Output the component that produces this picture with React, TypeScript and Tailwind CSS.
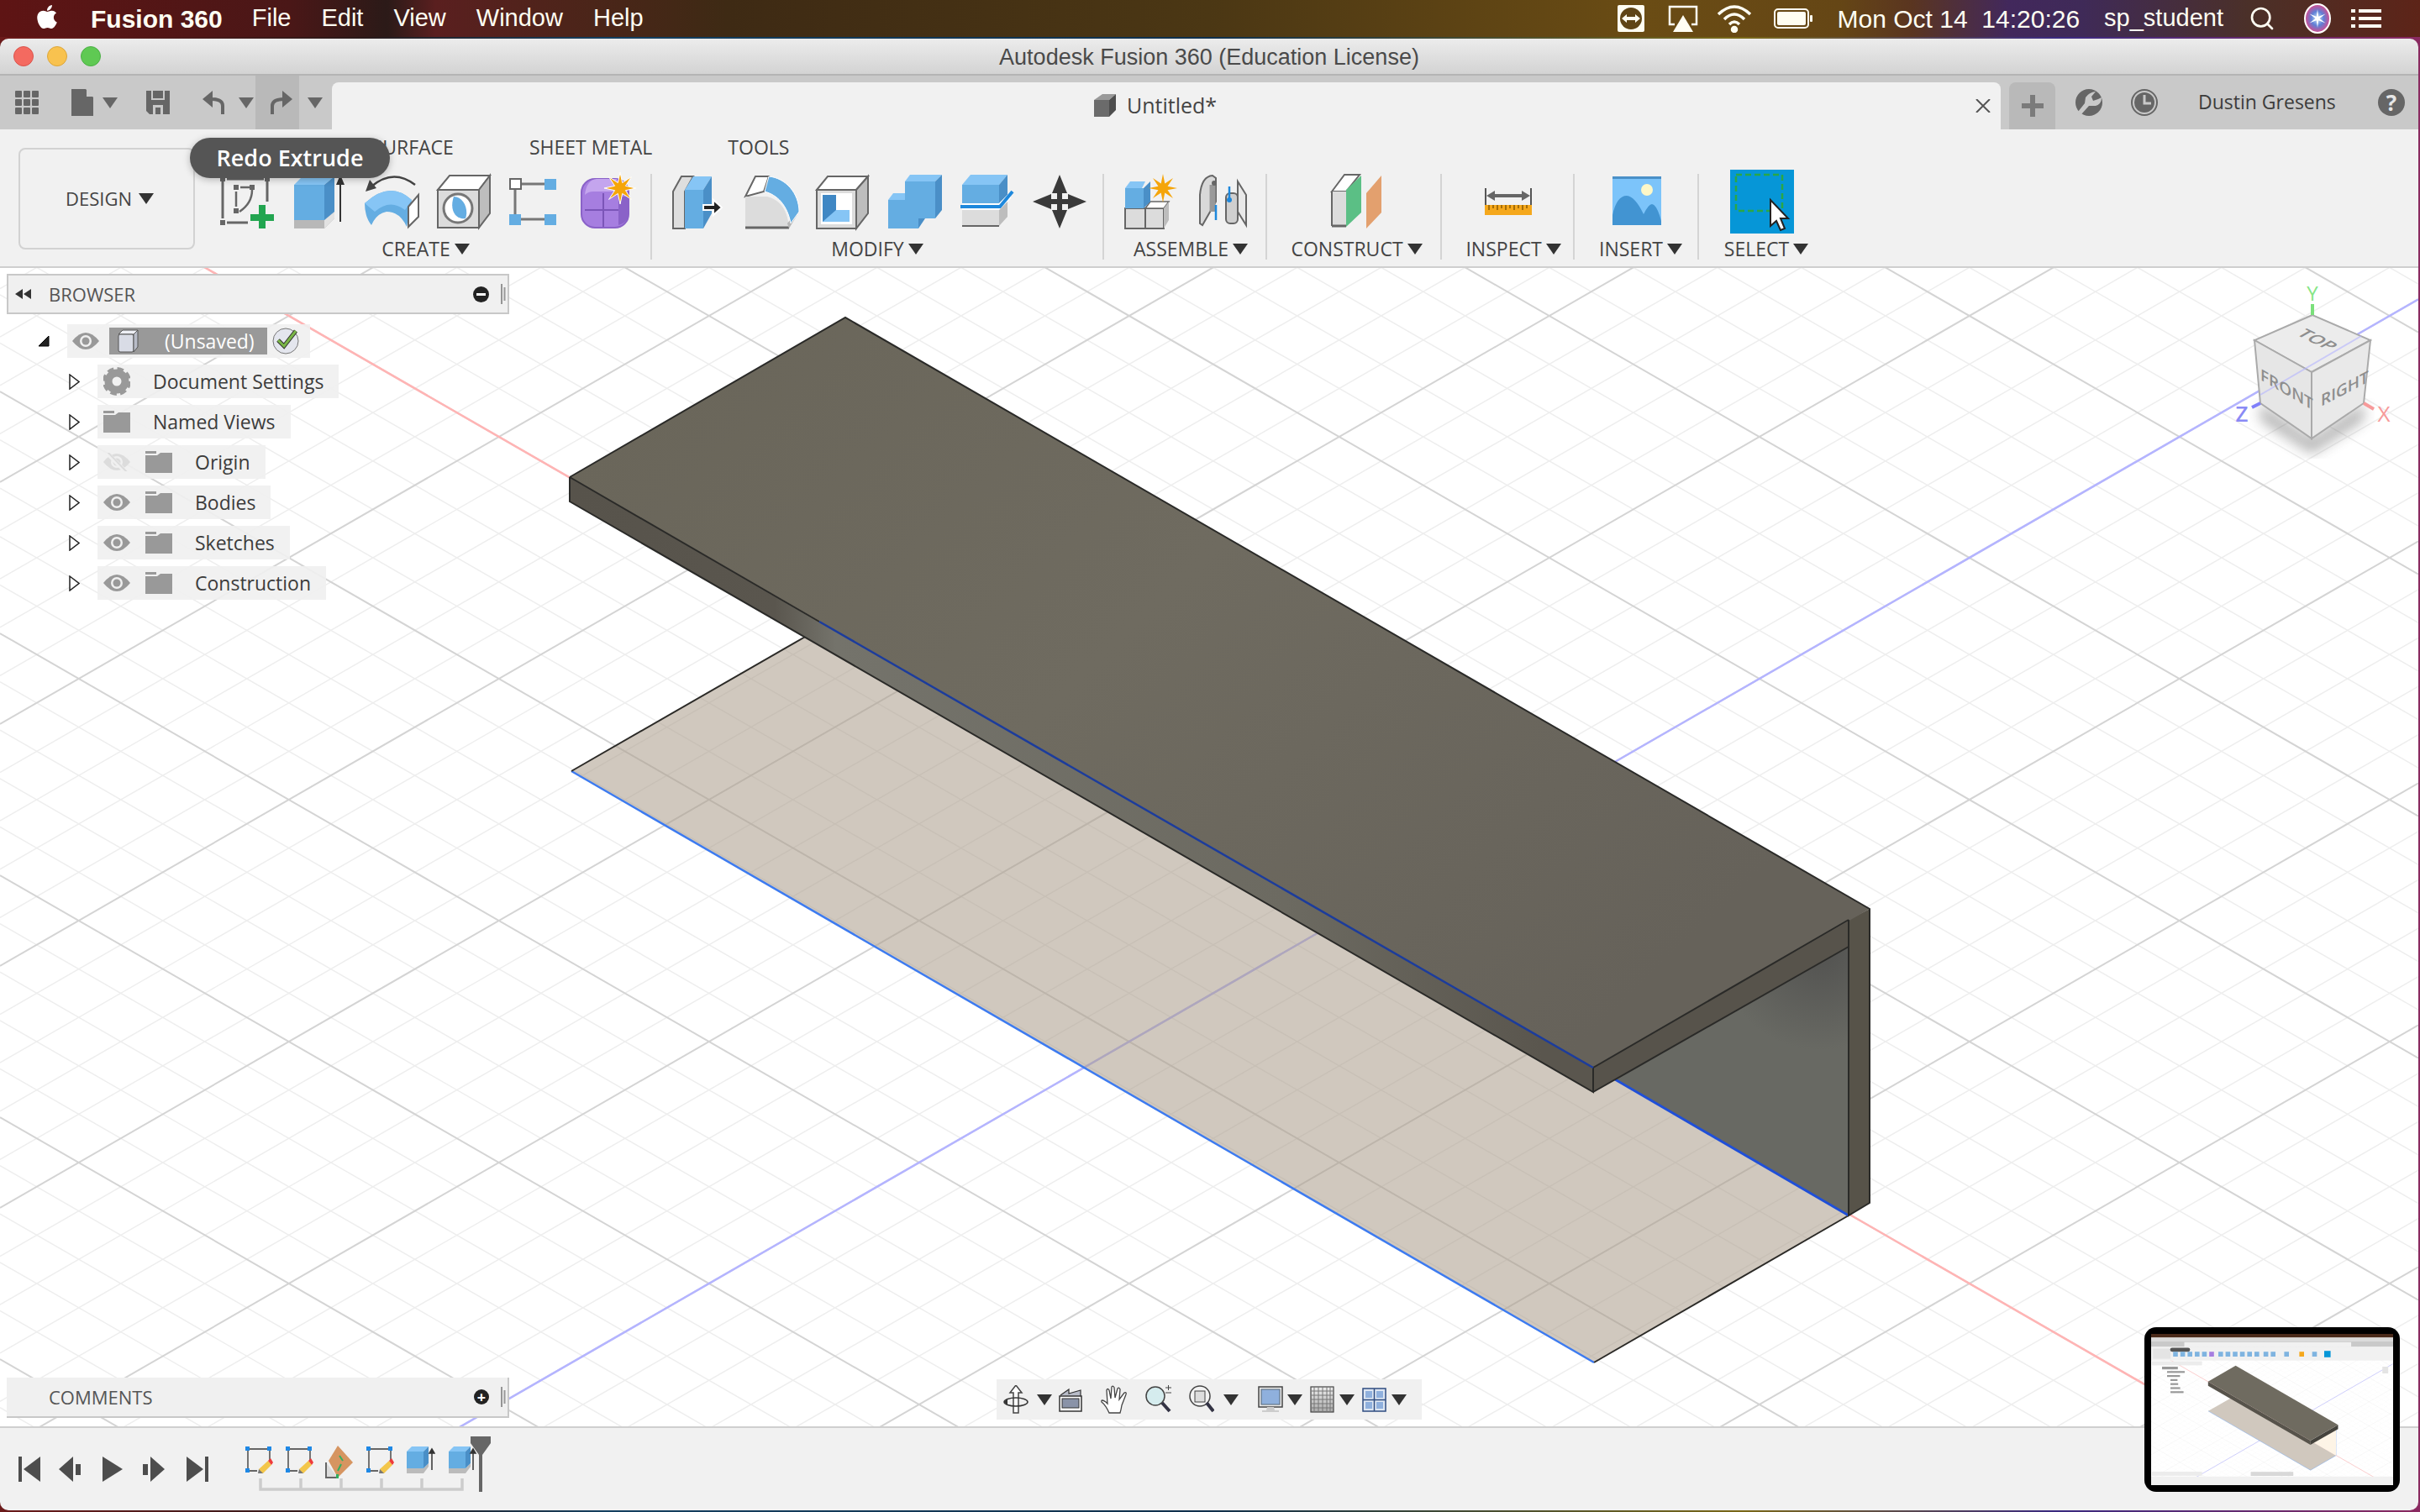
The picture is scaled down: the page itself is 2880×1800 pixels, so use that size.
import { FaApple } from "react-icons/fa";
import { Search } from "lucide-react";

const BLUE = "#64ade2";
const BLUE_TOP = "#86c5f5";
const BLUE_SIDE = "#4a8fc7";
const LINE = "#666666";

const Caret = ({ className = "", color = "#333333" }: { className?: string; color?: string }) => (
  <svg width="18" height="13" viewBox="0 0 18 13" className={`shrink-0 ${className}`}>
    <path d="M0 0H18L9 13Z" fill={color} />
  </svg>
);

const Icon = ({ children, className = "" }: { children: React.ReactNode; className?: string }) => (
  <svg width="64" height="64" viewBox="0 0 64 64" className={`shrink-0 overflow-visible ${className}`}>
    {children}
  </svg>
);

const star = (cx: number, cy: number, r: number, inner: number, n = 8) => {
  const pts: string[] = [];
  for (let i = 0; i < n * 2; i++) {
    const a = (Math.PI * i) / n - Math.PI / 2;
    const rad = i % 2 === 0 ? r : inner;
    pts.push(`${cx + rad * Math.cos(a)},${cy + rad * Math.sin(a)}`);
  }
  return pts.join(" ");
};

const SketchIcon = () => (
  <Icon>
    <g stroke={LINE} strokeWidth="3" fill="none">
      <path d="M3 8V52M8 57H33M56 8V32M8 5H52" />
      <path d="M19 20V38M24 15H35M38 18Q38 34 23 44" strokeWidth="2.5" />
    </g>
    <g fill={LINE}>
      <rect x="0" y="2" width="6" height="6" />
      <rect x="53" y="2" width="6" height="6" />
      <rect x="0" y="54" width="6" height="6" />
      <rect x="16" y="12" width="6" height="6" />
      <rect x="35" y="12" width="6" height="6" />
      <rect x="16" y="40" width="6" height="6" />
    </g>
    <path d="M46 36H54V47H64V55H54V64H46V55H36V47H46Z" fill="#22a550" />
  </Icon>
);

const ExtrudeIcon = () => (
  <Icon>
    <path d="M2 54H38L50 44V52L38 64H2Z" fill="#b8b8b8" />
    <path d="M38 54L50 44V52L38 64Z" fill="#e2e2e2" />
    <rect x="2" y="12" width="36" height="42" fill={BLUE} />
    <path d="M2 12L12 2H50L38 12Z" fill={BLUE_TOP} />
    <path d="M38 12L50 2V44L38 54Z" fill={BLUE_SIDE} />
    <path d="M57 56V6" stroke="#333" strokeWidth="2" />
    <path d="M57 0L62 12H52Z" fill="#333" />
  </Icon>
);

const RevolveIcon = () => (
  <Icon>
    <path d="M8 14Q34 -8 60 12" fill="none" stroke="#444" strokeWidth="2.5" />
    <path d="M1 20L6 6L14 16Z" fill="#444" />
    <path d="M0 34Q30 6 56 30L50 62Q42 44 26 44Q14 46 8 60Q0 50 0 34Z" fill={BLUE} />
    <path d="M0 34Q30 6 56 30L48 42Q30 28 12 44Z" fill={BLUE_TOP} />
    <path d="M52 38L64 24V50L52 62Z" fill="#fff" stroke={LINE} strokeWidth="2" />
  </Icon>
);

const HoleIcon = () => (
  <Icon>
    <path d="M1 18L15 1H63L50 18Z" fill="#fff" stroke={LINE} strokeWidth="2" />
    <path d="M50 18L63 1V46L50 63Z" fill="#bdbdbd" stroke={LINE} strokeWidth="2" />
    <rect x="1" y="18" width="49" height="45" fill="#dcdcdc" stroke={LINE} strokeWidth="2" />
    <circle cx="25" cy="40" r="17" fill="#fff" stroke="#777" strokeWidth="3" />
    <path d="M20 26C32 26 38 42 34 52C24 54 14 44 20 26Z" fill={BLUE} />
  </Icon>
);

const PatternIcon = () => (
  <Icon>
    <g stroke="#777" strokeWidth="3" fill="none">
      <path d="M14 11H42M7 17V47M14 53H42" />
    </g>
    <rect x="1" y="5" width="13" height="12" fill="#fff" stroke={LINE} strokeWidth="2" />
    <rect x="42" y="5" width="14" height="13" fill={BLUE} />
    <rect x="0" y="47" width="14" height="13" fill={BLUE} />
    <rect x="42" y="47" width="14" height="13" fill={BLUE} />
  </Icon>
);

const FormIcon = () => (
  <Icon>
    <rect x="0" y="5" width="56" height="58" rx="16" fill="#a67ee0" stroke="#8a62c8" strokeWidth="2" />
    <path d="M4 24Q6 6 18 5H42V20H14Q8 20 4 24Z" fill="#c4a5ee" />
    <path d="M44 26H56V50Q52 58 44 60Z" fill="#8a62c8" />
    <path d="M4 42H44M26 22V62" stroke="#7b55b8" strokeWidth="2" fill="none" />
    <polygon points={star(46, 16, 19, 7)} fill="#f5a50a" stroke="#fff" strokeWidth="1" />
  </Icon>
);

const PressPullIcon = () => (
  <Icon>
    <path d="M2 64V20L12 2H26L16 20V64Z" fill="#dedede" stroke={LINE} strokeWidth="2" />
    <rect x="16" y="18" width="22" height="46" fill={BLUE} />
    <path d="M16 18L26 2H48L38 18Z" fill={BLUE_TOP} />
    <path d="M38 18L48 2V46L38 64Z" fill={BLUE_SIDE} />
    <path d="M38 36H50V30L60 39L50 48V42H38Z" fill="#222" stroke="#fff" strokeWidth="2" />
  </Icon>
);

const FilletIcon = () => (
  <Icon>
    <path d="M2 26L14 2H30L24 20Z" fill="#fff" stroke={LINE} strokeWidth="2" />
    <path d="M2 26H28Q52 32 54 64H2Z" fill="#dcdcdc" />
    <path d="M2 63H54" stroke={LINE} strokeWidth="3" />
    <path d="M54 64L66 44V40L52 58Z" fill="#b5b5b5" />
    <path d="M30 2C50 4 66 22 66 44L56 58C52 36 40 24 25 20Z" fill={BLUE} stroke="#fff" strokeWidth="1" />
  </Icon>
);

const ShellIcon = () => (
  <Icon>
    <path d="M1 18L14 2H62L48 18Z" fill="#fff" stroke={LINE} strokeWidth="2" />
    <path d="M48 18L62 2V46L48 64Z" fill="#bdbdbd" stroke={LINE} strokeWidth="2" />
    <rect x="1" y="18" width="47" height="46" fill="#dcdcdc" stroke={LINE} strokeWidth="2" />
    <rect x="6" y="22" width="37" height="37" fill="#fff" />
    <rect x="8" y="24" width="16" height="32" fill="#3f87c4" />
    <path d="M24 42H40V56H8Z" fill={BLUE_TOP} />
  </Icon>
);

const CombineIcon = () => (
  <Icon>
    <path d="M0 30L6 22H30V30Z" fill={BLUE_TOP} />
    <rect x="0" y="30" width="36" height="34" fill={BLUE} />
    <path d="M36 42L44 42V52L36 64Z" fill={BLUE_SIDE} />
    <path d="M20 8L26 0H64L56 8Z" fill={BLUE_TOP} />
    <rect x="20" y="8" width="36" height="44" fill={BLUE} />
    <path d="M56 8L64 0V42L56 52Z" fill={BLUE_SIDE} />
  </Icon>
);

const ReplaceIcon = () => (
  <Icon>
    <path d="M2 12L12 0H56L46 12Z" fill={BLUE_TOP} />
    <rect x="2" y="12" width="44" height="22" fill={BLUE} />
    <path d="M46 12L56 0V24L46 34Z" fill={BLUE_SIDE} />
    <path d="M2 34H46L60 20V28L46 44H2Z" fill="#fff" />
    <path d="M0 38H47L62 20" fill="none" stroke="#1e88dc" strokeWidth="4" />
    <rect x="2" y="42" width="44" height="19" fill="#dcdcdc" />
    <path d="M46 42L56 32V50L46 61Z" fill="#bdbdbd" />
    <path d="M2 61H46" stroke={LINE} strokeWidth="2" />
  </Icon>
);

const MoveIcon = () => (
  <Icon>
    <path
      d="M32 0L41 22H35V29H42V23L64 32L42 41V35H35V42H41L32 64L23 42H29V35H22V41L0 32L22 23V29H29V22H23Z"
      fill="#3a3a3a"
    />
  </Icon>
);

const NewComponentIcon = () => (
  <Icon>
    <rect x="2" y="40" width="24" height="24" fill="#dcdcdc" stroke={LINE} strokeWidth="2" />
    <rect x="26" y="40" width="22" height="24" fill="#dcdcdc" stroke={LINE} strokeWidth="2" />
    <path d="M26 40L32 32H54L48 40Z" fill="#fff" stroke={LINE} strokeWidth="1.5" />
    <path d="M48 40L54 32V54L48 64Z" fill="#bdbdbd" />
    <path d="M2 16L8 8H26L22 16Z" fill={BLUE_TOP} />
    <rect x="2" y="16" width="22" height="24" fill={BLUE} />
    <path d="M24 16L32 8V32L24 40Z" fill={BLUE_SIDE} />
    <polygon points={star(47, 16, 17, 6)} fill="#f5a50a" />
  </Icon>
);

const JointIcon = () => (
  <Icon>
    <path d="M5 24Q7 2 20 1L24 4V32L8 60L5 58Z" fill="#d8d8d8" stroke={LINE} strokeWidth="2" />
    <path d="M20 12V44" stroke="#999" strokeWidth="7" />
    <circle cx="22" cy="10" r="3" fill={LINE} />
    <path d="M50 8L60 24V60L50 44Z" fill="#e8e8e8" stroke={LINE} strokeWidth="2" />
    <rect x="36" y="22" width="14" height="36" rx="5" fill="#cfcfcf" stroke={LINE} strokeWidth="2" />
    <path d="M24 36V54M40 14V30" stroke="#1e88dc" strokeWidth="2.5" />
    <circle cx="40" cy="30" r="3" fill="#1e88dc" />
  </Icon>
);

const ConstructIcon = () => (
  <Icon>
    <path d="M1 20L16 0H34L18 20Z" fill="#fff" stroke={LINE} strokeWidth="2" />
    <rect x="1" y="20" width="17" height="41" fill="#dcdcdc" />
    <path d="M1 61H18" stroke={LINE} strokeWidth="3" />
    <path d="M1 20V61" stroke={LINE} strokeWidth="2" />
    <path d="M18 18L36 1V45L18 62Z" fill="#5bbf85" />
    <path d="M42 22L60 1V45L42 64Z" fill="#e3a06e" />
  </Icon>
);

const InspectIcon = () => (
  <Icon>
    <path d="M5 16V36M59 16V36" stroke="#555" strokeWidth="2" />
    <path d="M12 25H52" stroke="#666" strokeWidth="4" />
    <path d="M6 25L16 19V31ZM58 25L48 19V31Z" fill="#666" />
    <rect x="4" y="36" width="56" height="12" fill="#f5a81c" />
    <path
      d="M9 36V42M14 36V40M19 36V42M24 36V40M29 36V42M34 36V40M39 36V42M44 36V40M49 36V42M54 36V40"
      stroke="#8a5a00"
      strokeWidth="1.5"
    />
  </Icon>
);

const InsertIcon = () => (
  <Icon>
    <rect x="3" y="2" width="58" height="58" fill="#7cc4fa" />
    <rect x="3" y="2" width="58" height="3" fill="#4a90c8" />
    <circle cx="44" cy="18" r="7" fill="#fdf8c8" />
    <path d="M3 48Q8 25 20 25Q30 26 40 47Q46 35 50 35Q56 36 61 55V60H3Z" fill="#4294d2" />
  </Icon>
);

const SelectIcon = () => (
  <svg width="76" height="76" viewBox="0 0 76 76" className="shrink-0 -my-[6px]">
    <rect width="76" height="76" fill="#0696d7" />
    <rect x="7" y="6" width="55" height="43" fill="none" stroke="#2aa745" strokeWidth="2.5" strokeDasharray="7 4" />
    <path d="M48 36V67L55 61L60 72L65 70L60 58H69Z" fill="#fff" stroke="#222" strokeWidth="2" />
  </svg>
);

const GroupLabel = ({ label, pad = "" }: { label: string; pad?: string }) => (
  <div className={`mt-[11px] flex items-center justify-center gap-[5px] text-[23px] leading-[26px] text-[#444] ${pad}`}>
    {label}
    <Caret />
  </div>
);

const Group = ({
  label,
  children,
  width,
  pad,
  labelPad,
}: {
  label: string;
  children: React.ReactNode;
  width: string;
  pad: string;
  labelPad?: string;
}) => (
  <div className={`flex h-[102px] flex-col border-r-2 border-[#d4d4d4] ${width}`}>
    <div className={`mt-px flex h-[64px] items-start gap-[22px] ${pad}`}>{children}</div>
    <GroupLabel label={label} pad={labelPad} />
  </div>
);

const Ribbon = () => (
  <div className="relative flex h-[165px] shrink-0 border-b-2 border-[#cfcfcf] bg-[#f1f1f1]">
    <div className="ml-[22px] mt-[22px] flex h-[121px] w-[210px] items-center justify-center gap-[8px] rounded-[8px] border-2 border-[#d2d2d2] pl-[7px] text-[22px] text-[#444]">
      DESIGN
      <Caret />
    </div>
    <div className="flex flex-col">
      <div className="flex h-[42px] items-center gap-[90px] pl-[55px] text-[23px] text-[#444]">
        <span>SOLID</span>
        <span>SURFACE</span>
        <span>SHEET METAL</span>
        <span>TOOLS</span>
      </div>
      <div className="mt-[11px] flex">
        <Group label="CREATE" width="w-[544px]" pad="pl-[30px]" labelPad="pl-[7px]">
          <SketchIcon />
          <ExtrudeIcon />
          <RevolveIcon />
          <HoleIcon />
          <PatternIcon />
          <FormIcon />
        </Group>
        <Group label="MODIFY" width="w-[538px]" pad="pl-[23px]">
          <PressPullIcon />
          <FilletIcon />
          <ShellIcon />
          <CombineIcon />
          <ReplaceIcon />
          <MoveIcon />
        </Group>
        <Group label="ASSEMBLE" width="w-[194px]" pad="pl-[23px]" labelPad="pl-[14px]">
          <NewComponentIcon />
          <JointIcon />
        </Group>
        <Group label="CONSTRUCT" width="w-[208px]" pad="pl-[76px]" labelPad="pl-[7px]">
          <ConstructIcon />
        </Group>
        <Group label="INSPECT" width="w-[158px]" pad="pl-[47px]" labelPad="pl-[14px]">
          <InspectIcon />
        </Group>
        <Group label="INSERT" width="w-[148px]" pad="pl-[42px]" labelPad="pl-[11px]">
          <InsertIcon />
        </Group>
        <div className="flex h-[102px] w-[160px] flex-col">
          <div className="mt-px flex h-[64px] items-start pl-[37px]">
            <SelectIcon />
          </div>
          <GroupLabel label="SELECT" />
        </div>
      </div>
    </div>
    <div className="absolute left-[226px] top-[10px] flex h-[48px] w-[238px] items-center justify-center rounded-[24px] bg-[#555555] text-[27px] font-semibold text-white shadow-[0_2px_8px_rgba(0,0,0,0.25)]">
      Redo Extrude
    </div>
  </div>
);

const MenuBar = () => (
  <div className="flex h-[44px] w-full items-center bg-[linear-gradient(90deg,#5e1414_0%,#4a1717_12%,#2b1a18_16%,#5a1f1f_18%,#3e2a14_30%,#4b3714_50%,#6a4c14_68%,#654615_76%,#5a3520_79%,#42285c_83%,#3f2a58_86%,#4b3028_93%,#5d2418_100%)] font-['Liberation_Sans',sans-serif] text-[29px] text-[#fffef2]">
    <FaApple className="ml-[40px] mb-[4px] shrink-0 text-white" size={32} />
    <span className="ml-[36px] text-[30px] font-bold">Fusion 360</span>
    <div className="ml-[35px] flex gap-[36px]">
      <span>File</span>
      <span>Edit</span>
      <span>View</span>
      <span>Window</span>
      <span>Help</span>
    </div>
    <div className="ml-auto flex items-center">
      <svg width="32" height="32" viewBox="0 0 32 32" className="shrink-0">
        <rect width="32" height="32" rx="2" fill="#fffef2" />
        <circle cx="16" cy="16" r="13" fill="#5f4516" />
        <path d="M5 16L11 11V14H21V11L27 16L21 21V18H11V21Z" fill="#fffef2" />
      </svg>
      <svg width="36" height="32" viewBox="0 0 36 32" className="ml-[28px] shrink-0">
        <path d="M8 23H2V2H34V23H28" fill="none" stroke="#fffef2" strokeWidth="2.5" />
        <path d="M18 12L30 32H6Z" fill="#fffef2" />
      </svg>
      <svg width="42" height="34" viewBox="0 0 42 34" className="ml-[22px] shrink-0" fill="none" stroke="#fffef2" strokeWidth="3.5">
        <path d="M2 12Q21 -6 40 12" />
        <path d="M9 18Q21 6 33 18" />
        <path d="M15 24Q21 18 27 24" />
        <circle cx="21" cy="30" r="2.5" fill="#fffef2" />
      </svg>
      <svg width="46" height="24" viewBox="0 0 46 24" className="ml-[26px] shrink-0">
        <rect x="1" y="1" width="40" height="22" rx="4" fill="none" stroke="#fffef2" strokeWidth="2" />
        <rect x="4" y="4" width="34" height="16" rx="2" fill="#fffef2" />
        <rect x="43" y="8" width="3" height="8" rx="1" fill="#fffef2" />
      </svg>
      <span className="ml-[30px] whitespace-pre text-[30px]">Mon Oct 14  14:20:26</span>
      <span className="ml-[29px]">sp_student</span>
      <Search className="ml-[30px] shrink-0" size={32} strokeWidth={2} color="#fffef2" />
      <svg width="32" height="36" viewBox="0 0 32 36" className="ml-[34px] shrink-0">
        <defs>
          <radialGradient id="siri">
            <stop offset="0" stopColor="#cfe6f5" />
            <stop offset="0.5" stopColor="#5f7fd6" />
            <stop offset="1" stopColor="#d84a8c" />
          </radialGradient>
        </defs>
        <ellipse cx="16" cy="18" rx="15" ry="17" fill="url(#siri)" stroke="#fff" strokeWidth="2" />
        <polygon points={star(16, 18, 11, 2.5, 6)} fill="#fff" />
      </svg>
      <svg width="36" height="22" viewBox="0 0 36 22" className="ml-[24px] mr-[46px] shrink-0" fill="#fffef2">
        <rect y="0" width="5" height="4" />
        <rect x="9" y="0" width="27" height="4" />
        <rect y="9" width="5" height="4" />
        <rect x="9" y="9" width="27" height="4" />
        <rect y="18" width="5" height="4" />
        <rect x="9" y="18" width="27" height="4" />
      </svg>
    </div>
  </div>
);

const TitleBar = () => (
  <div className="grid h-[44px] shrink-0 grid-cols-[1fr_auto_1fr] items-center border-b-2 border-[#b4b4b4] bg-[linear-gradient(180deg,#ececec,#d3d3d3)]">
    <div className="flex gap-[16px] pl-[16px]">
      <div className="h-[24px] w-[24px] rounded-full border border-[#d9534c] bg-[#f46a60]" />
      <div className="h-[24px] w-[24px] rounded-full border border-[#dca63a] bg-[#f8c24f]" />
      <div className="h-[24px] w-[24px] rounded-full border border-[#4caf46] bg-[#5fc953]" />
    </div>
    <span className="pt-[2px] font-['Liberation_Sans',sans-serif] text-[27px] text-[#4a4a4a]">
      Autodesk Fusion 360 (Education License)
    </span>
    <div />
  </div>
);

const Toolbar = () => (
  <div className="flex h-[64px] shrink-0 items-center bg-[#c9c9c9]">
    <svg width="28" height="28" viewBox="0 0 28 28" className="ml-[18px] shrink-0" fill="#666">
      {[0, 10, 20].map((y) =>
        [0, 10, 20].map((x) => <rect key={`${x}-${y}`} x={x} y={y} width="8" height="8" rx="1" />)
      )}
    </svg>
    <svg width="26" height="32" viewBox="0 0 26 32" className="ml-[39px] shrink-0">
      <path d="M0 0H17L26 10V32H0Z" fill="#666" />
      <path d="M18 0L26 9H18Z" fill="#c9c9c9" />
    </svg>
    <Caret className="ml-[11px]" color="#666" />
    <svg width="28" height="28" viewBox="0 0 28 28" className="ml-[34px] shrink-0">
      <path d="M0 0H28V28H4L0 24Z" fill="#666" />
      <rect x="6" y="0" width="16" height="11" fill="#c9c9c9" />
      <rect x="8" y="0" width="12" height="9" fill="#666" />
      <rect x="8" y="17" width="12" height="11" fill="#c9c9c9" />
      <rect x="11" y="20" width="6" height="8" fill="#666" />
    </svg>
    <svg width="26" height="28" viewBox="0 0 26 28" className="ml-[39px] shrink-0">
      <path d="M24 28V18Q24 10 10 10" fill="none" stroke="#666" strokeWidth="4" />
      <path d="M0 10L12 0V20Z" fill="#666" />
    </svg>
    <Caret className="ml-[17px]" color="#666" />
    <div className="ml-[2px] flex h-[64px] w-[52px] shrink-0 items-center bg-[#b9b9b9] pl-[18px]">
      <svg width="26" height="28" viewBox="0 0 26 28">
        <path d="M2 28V18Q2 10 16 10" fill="none" stroke="#666" strokeWidth="4" />
        <path d="M26 10L14 0V20Z" fill="#666" />
      </svg>
    </div>
    <Caret className="ml-[10px]" color="#666" />
    <div className="ml-[11px] mt-[8px] flex h-[56px] w-[1986px] shrink-0 items-center rounded-t-[8px] bg-[#f1f1f1] pl-[905px] pr-[12px]">
      <svg width="30" height="30" viewBox="0 0 30 30" className="shrink-0">
        <path d="M2 8L12 1H28L20 8Z" fill="#999" />
        <rect x="2" y="8" width="18" height="20" fill="#6b6b6b" />
        <path d="M20 8L28 1V20L20 28Z" fill="#4e4e4e" />
      </svg>
      <span className="ml-[11px] text-[25px] text-[#444]">Untitled*</span>
      <svg width="18" height="16" viewBox="0 0 18 16" className="ml-auto shrink-0">
        <path d="M1 0L17 16M17 0L1 16" stroke="#555" strokeWidth="2" />
      </svg>
    </div>
    <div className="ml-[10px] mt-[8px] flex h-[56px] w-[55px] shrink-0 items-center justify-center rounded-t-[8px] bg-[#b9b9b9]">
      <svg width="26" height="26" viewBox="0 0 26 26">
        <path d="M10 0H16V10H26V16H16V26H10V16H0V10H10Z" fill="#7b7b7b" />
      </svg>
    </div>
    <svg width="32" height="32" viewBox="0 0 32 32" className="ml-[24px] shrink-0">
      <circle cx="16" cy="16" r="16" fill="#666" />
      <path d="M24 3L19 9L21 14L27 12L31 10Q31 18 24 20L16 20L7 30L3 27L11 17L12 10Q16 4 24 3Z" fill="#c9c9c9" />
    </svg>
    <svg width="32" height="32" viewBox="0 0 32 32" className="ml-[34px] shrink-0">
      <circle cx="16" cy="16" r="15" fill="none" stroke="#666" strokeWidth="2" />
      <circle cx="16" cy="16" r="12" fill="#666" />
      <path d="M16 7V17H24" fill="none" stroke="#c9c9c9" strokeWidth="3" />
    </svg>
    <span className="mb-[2px] ml-[48px] shrink-0 text-[23px] text-[#3c3c3c]">Dustin Gresens</span>
    <div className="ml-[50px] flex h-[32px] w-[32px] shrink-0 items-center justify-center rounded-full bg-[#666] text-[26px] font-bold leading-none text-[#e6e6e6]">
      ?
    </div>
  </div>
);

const Eye = ({ off = false }: { off?: boolean }) => (
  <svg width="32" height="22" viewBox="0 0 32 22" className="shrink-0">
    <path d="M0 11Q16 -9 32 11Q16 31 0 11Z" fill={off ? "#dcdcdc" : "#999"} />
    <circle cx="16" cy="11" r="7" fill="#f0f0f0" />
    <circle cx="16" cy="11" r="4.5" fill={off ? "#dcdcdc" : "#999"} />
    {off && <path d="M4 0L28 24" stroke="#f0f0f0" strokeWidth="5" />}
    {off && <path d="M4 -2L29 24" stroke="#dcdcdc" strokeWidth="2" />}
  </svg>
);

const Folder = () => (
  <svg width="32" height="26" viewBox="0 0 32 26" className="shrink-0">
    <path d="M0 0H13V3H0Z" fill="#999" />
    <path d="M0 5H14L18 2H32V26H0Z" fill="#999" />
  </svg>
);

const Gear = () => (
  <svg width="32" height="34" viewBox="0 0 32 34" className="shrink-0">
    <circle cx="16" cy="17" r="10" fill="none" stroke="#999" strokeWidth="9" />
    <circle cx="16" cy="17" r="15" fill="none" stroke="#999" strokeWidth="4" strokeDasharray="7.5 4.3" />
  </svg>
);

const Chevron = () => (
  <svg width="13" height="19" viewBox="0 0 13 19" className="ml-[74px] shrink-0">
    <path d="M1 1L12 9.5L1 18Z" fill="#fff" stroke="#222" strokeWidth="1.5" />
  </svg>
);

const TreeRow = ({ label, icon, eye }: { label: string; icon?: React.ReactNode; eye?: "on" | "off" }) => (
  <div className="flex h-[40px] items-center">
    <Chevron />
    <div className="ml-[21px] flex h-[40px] items-center bg-[#f0f0f0]/90 pl-[7px] pr-[18px] text-[23px] text-[#3c3c3c]">
      {eye && <Eye off={eye === "off"} />}
      {eye ? (
        <>
          <div className="ml-[18px]">
            <Folder />
          </div>
          <span className="ml-[27px]">{label}</span>
        </>
      ) : (
        <>
          {icon}
          <span className="ml-[27px]">{label}</span>
        </>
      )}
    </div>
  </div>
);

const PanelGrip = () => (
  <svg width="6" height="24" viewBox="0 0 6 24" className="ml-[14px] shrink-0">
    <path d="M1 0V24" stroke="#777" strokeWidth="1.5" />
    <path d="M4.5 4V20" stroke="#999" strokeWidth="2" />
  </svg>
);

const Browser = () => (
  <div className="absolute left-[8px] top-[7px] w-[598px]">
    <div className="flex h-[48px] items-center border-2 border-[#c8c8c8] bg-[#f0f0f0]">
      <svg width="20" height="12" viewBox="0 0 20 12" className="ml-[8px] shrink-0" fill="#333">
        <path d="M9 0V12L0 6ZM19 0V12L10 6Z" />
      </svg>
      <span className="ml-[20px] text-[22px] text-[#555]">BROWSER</span>
      <div className="ml-auto flex h-[19px] w-[19px] items-center justify-center rounded-full bg-[#222]">
        <div className="h-[3px] w-[11px] bg-white" />
      </div>
      <PanelGrip />
      <div className="w-[2px]" />
    </div>
    <div className="mt-[12px] flex flex-col gap-[8px]">
      <div className="flex h-[40px] items-center">
        <svg width="14" height="14" viewBox="0 0 14 14" className="ml-[37px] shrink-0">
          <path d="M13 1V13H1Z" fill="#222" />
          <path d="M13 1V13H1Z" fill="none" stroke="#000" />
        </svg>
        <div className="ml-[21px] flex h-[40px] items-center bg-[#f0f0f0]/90 pl-[6px] pr-[13px]">
          <Eye />
          <div className="ml-[12px] flex h-[32px] w-[188px] items-center bg-[#999] pl-[9px] text-[23px] text-white">
            <svg width="26" height="28" viewBox="0 0 26 28" className="shrink-0">
              <path d="M2 6L7 1H25L20 6Z" fill="#eef0f6" stroke="#555" />
              <rect x="2" y="6" width="18" height="21" rx="2" fill="#d9dce6" stroke="#555" />
              <path d="M20 6L25 1V21L20 27Z" fill="#b8bcc8" stroke="#555" />
            </svg>
            <span className="ml-[31px]">(Unsaved)</span>
          </div>
          <svg width="32" height="32" viewBox="0 0 32 32" className="ml-[6px] shrink-0">
            <circle cx="16" cy="16" r="15" fill="#e4e6ee" stroke="#777" />
            <path d="M7 15L14 22L28 4" fill="none" stroke="#333" strokeWidth="5" />
            <path d="M7 15L14 22L28 4" fill="none" stroke="#7ab648" strokeWidth="3" />
          </svg>
        </div>
      </div>
      <TreeRow label="Document Settings" icon={<Gear />} />
      <TreeRow label="Named Views" icon={<Folder />} />
      <TreeRow label="Origin" eye="off" />
      <TreeRow label="Bodies" eye="on" />
      <TreeRow label="Sketches" eye="on" />
      <TreeRow label="Construction" eye="on" />
    </div>
  </div>
);

const Comments = () => (
  <div className="absolute bottom-[10px] left-[8px] flex h-[48px] w-[598px] items-center border-b-2 border-r-2 border-[#c8c8c8] bg-[#f0f0f0]">
    <span className="ml-[50px] text-[22px] text-[#555]">COMMENTS</span>
    <div className="ml-auto flex h-[18px] w-[18px] items-center justify-center rounded-full bg-[#222] text-[18px] font-bold leading-none text-white">
      +
    </div>
    <PanelGrip />
    <div className="w-[2px]" />
  </div>
);

const NavBar = () => (
  <div className="absolute bottom-[8px] left-[1186px] flex h-[48px] w-[506px] items-center bg-[#f0f0f0]">
    <svg width="30" height="34" viewBox="0 0 30 34" className="ml-[8px] shrink-0">
      <path d="M15 0L22 9H18V33H12V9H8Z" fill="#fff" stroke="#444" strokeWidth="1.5" />
      <ellipse cx="15" cy="20" rx="14" ry="5" fill="none" stroke="#333" strokeWidth="1.5" />
      <path d="M1 20L5 16V24Z" fill="#333" />
    </svg>
    <Caret className="ml-[10px]" />
    <svg width="28" height="30" viewBox="0 0 28 30" className="ml-[8px] shrink-0">
      <path d="M2 10L12 3V8L26 4V11" fill="#b8bcc8" stroke="#333" strokeWidth="1.2" />
      <rect x="1" y="11" width="26" height="18" fill="#fff" stroke="#333" strokeWidth="1.5" />
      <rect x="4" y="14" width="20" height="11" fill="#8a93a8" stroke="#333" />
    </svg>
    <svg width="32" height="34" viewBox="0 0 32 34" className="ml-[22px] shrink-0">
      <path
        d="M10 33Q6 24 1 20Q0 16 6 20L8 22L7 6Q8 3 10 6L12 16L13 2Q15 0 16 3L17 15L20 4Q22 2 23 5L22 17L28 9Q31 8 30 11L25 24Q24 30 23 33Z"
        fill="#fff"
        stroke="#444"
        strokeWidth="1.3"
      />
    </svg>
    <svg width="31" height="34" viewBox="0 0 31 34" className="ml-[21px] shrink-0">
      <circle cx="12" cy="13" r="11" fill="#d5ecee" stroke="#444" strokeWidth="1.5" />
      <path d="M20 21L29 31" stroke="#334" strokeWidth="4" />
      <path d="M24 3H31M27.5 0V6M24 9H31" stroke="#444" strokeWidth="1" />
    </svg>
    <svg width="30" height="34" viewBox="0 0 30 34" className="ml-[21px] shrink-0">
      <circle cx="13" cy="13" r="12" fill="#f2f2f2" stroke="#444" strokeWidth="1.5" />
      <rect x="7" y="7" width="12" height="13" fill="#ddd" stroke="#444" />
      <path d="M21 21L29 31" stroke="#334" strokeWidth="4" />
    </svg>
    <Caret className="ml-[11px]" />
    <svg width="30" height="32" viewBox="0 0 30 32" className="ml-[23px] shrink-0">
      <rect x="1" y="1" width="28" height="24" fill="#e8e8e8" stroke="#444" strokeWidth="1.5" />
      <rect x="4" y="4" width="22" height="18" fill="#8fb0dd" stroke="#567" />
      <path d="M11 25H19L20 29H25V31H5V29H10Z" fill="#ccc" />
    </svg>
    <Caret className="ml-[5px]" />
    <svg width="29" height="32" viewBox="0 0 29 32" className="ml-[9px] shrink-0">
      <rect x="1" y="1" width="27" height="30" fill="url(#grid-fill)" stroke="#444" strokeWidth="1.2" />
      <path
        d="M5 1V31M10 1V31M15 1V31M20 1V31M24 1V31M1 6H28M1 11H28M1 16H28M1 21H28M1 26H28"
        stroke="#777"
        strokeWidth="1"
      />
      <defs>
        <linearGradient id="grid-fill" x1="0" y1="0" x2="0" y2="1">
          <stop offset="0" stopColor="#eee" />
          <stop offset="1" stopColor="#aaa" />
        </linearGradient>
      </defs>
    </svg>
    <Caret className="ml-[6px]" />
    <svg width="29" height="29" viewBox="0 0 29 29" className="ml-[9px] shrink-0">
      <rect x="1" y="1" width="27" height="27" fill="#dde6f2" stroke="#2f4c80" strokeWidth="1.5" />
      <path d="M14.5 1V28M1 14.5H28" stroke="#2f4c80" strokeWidth="1.5" />
      <rect x="4" y="4" width="8" height="8" fill="#8fb0dd" />
      <rect x="17" y="4" width="8" height="8" fill="#8fb0dd" />
      <rect x="4" y="17" width="8" height="8" fill="#8fb0dd" />
      <rect x="17" y="17" width="8" height="8" fill="#8fb0dd" />
    </svg>
    <Caret className="ml-[6px]" />
  </div>
);

const SLOPE = 0.576;
const gridLines = Array.from({ length: 110 }, (_, i) => i - 50);

const GridLines = ({ major, minorColor, majorColor }: { major: boolean; minorColor: string; majorColor: string }) => (
  <g stroke={major ? majorColor : minorColor} strokeWidth={major ? 2 : 1.5}>
    {gridLines
      .filter((k) => (k % 5 === 0) === major)
      .map((k) => {
        const c = 1042 + 57.6 * k;
        const d = 1150 + 57.6 * k;
        return (
          <g key={k}>
            <line x1="0" y1={c} x2="2878" y2={c + SLOPE * 2878} />
            <line x1="0" y1={d + 864} x2="2878" y2={d + 864 - SLOPE * 2878} />
          </g>
        );
      })}
  </g>
);

const Scene = () => (
  <svg
    className="absolute inset-0 h-full w-full"
    viewBox="0 319 2878 1379"
    preserveAspectRatio="none"
    fontFamily="'Open Sans', sans-serif"
  >
    <defs>
      <linearGradient id="plate-top" x1="0" y1="0" x2="1" y2="0.6">
        <stop offset="0" stopColor="#696559" />
        <stop offset="0.5" stopColor="#6f6b60" />
        <stop offset="1" stopColor="#66625a" />
      </linearGradient>
      <linearGradient id="plate-side" gradientUnits="userSpaceOnUse" x1="678" y1="0" x2="1896" y2="0">
        <stop offset="0" stopColor="#57534b" />
        <stop offset="0.2" stopColor="#5a564e" />
        <stop offset="0.26" stopColor="#74736b" />
        <stop offset="0.7" stopColor="#6c6a61" />
        <stop offset="0.95" stopColor="#5a564e" />
      </linearGradient>
      <radialGradient id="wall-shadow" gradientUnits="userSpaceOnUse" cx="2165" cy="1130" r="120">
        <stop offset="0" stopColor="#525250" />
        <stop offset="1" stopColor="#686963" />
      </radialGradient>
      <filter id="cube-blur">
        <feGaussianBlur stdDeviation="8" />
      </filter>
    </defs>
    <rect x="0" y="319" width="2878" height="1379" fill="#fff" />
    <GridLines major={false} minorColor="#eeeeee" majorColor="#d4d4d4" />
    <GridLines major minorColor="#eeeeee" majorColor="#d4d4d4" />
    <line x1="0" y1={2014} x2="2878" y2={2014 - SLOPE * 2878} stroke="#b4b4ff" strokeWidth="2.5" />
    <line x1="0" y1={178} x2="2878" y2={178 + SLOPE * 2878} stroke="#ffb4b4" strokeWidth="2.5" />

    <polygon points="680,918 1897,1622 2200,1447 983,744" fill="#aa9b89" fillOpacity="0.55" />
    <line x1="680" y1="918" x2="1897" y2="1622" stroke="#3d7bf0" strokeWidth="2.5" />
    <line x1="680" y1="918" x2="960" y2="757" stroke="#2b2a27" strokeWidth="2" />
    <line x1="1897" y1="1622" x2="2200" y2="1447" stroke="#2b2a27" strokeWidth="2" />

    <polygon points="1922,1285 2200,1127 2200,1447" fill="url(#wall-shadow)" />
    <line x1="1922" y1="1285" x2="2200" y2="1447" stroke="#1f4fd8" strokeWidth="3" />
    <polygon points="2200,1095 2225,1082 2225,1432 2200,1447" fill="#575349" />
    <polygon points="1896,1271 2200,1095 2200,1127 1896,1300" fill="#57534b" />
    <polygon points="678,568 1896,1271 1896,1300 678,597" fill="url(#plate-side)" />
    <polygon points="1006,378 678,568 1896,1271 2225,1082" fill="url(#plate-top)" />
    <g stroke="#2a2a28" strokeWidth="2" fill="none">
      <path d="M678 568L1006 378L2225 1082V1432L2200 1447V1095" />
      <path d="M678 568V597L1896 1300V1271L2200 1095" />
      <path d="M1896 1300L2200 1127" />
      <path d="M678 568L975 740" />
    </g>
    <line x1="975" y1="740" x2="1896" y2="1271" stroke="#1c3c9c" strokeWidth="2.5" />

    <polygon points="2690,480 2751,522 2813,480 2813,500 2751,540 2690,500" fill="#555" filter="url(#cube-blur)" opacity="0.45" />
    <polygon points="2752,375 2683,405 2751,443 2821,405" fill="#ececec" stroke="#aaa" strokeWidth="2" />
    <polygon points="2683,405 2751,443 2751,522 2690,480" fill="#e6e6e6" stroke="#aaa" strokeWidth="2" />
    <polygon points="2751,443 2821,405 2813,480 2751,522" fill="#e9e9e9" stroke="#aaa" strokeWidth="2" />
    <line x1="2690" y1="470" x2="2810" y2="400" stroke="#b4b4ff" strokeWidth="2" opacity=".6" />
    <g fill="#8e8e8e" fontWeight="600" fontSize="19">
      <text transform="matrix(1 0.5 -0.9 0.5 2732 398)" fontSize="20">TOP</text>
      <text transform="matrix(1 0.58 0 1 2690 452)">FRONT</text>
      <text transform="matrix(1 -0.52 0 1 2762 484)">RIGHT</text>
    </g>
    <path d="M2752 375V362" stroke="#7be07b" strokeWidth="4" />
    <text x="2752" y="358" textAnchor="middle" fontSize="24" fill="#86e686">Y</text>
    <path d="M2690 480L2680 485" stroke="#7f7ffa" strokeWidth="4" />
    <text x="2668" y="502" textAnchor="middle" fontSize="26" fontWeight="600" fill="#8a8af5">Z</text>
    <path d="M2813 480L2825 487" stroke="#f79a9a" strokeWidth="4" />
    <text x="2837" y="502" textAnchor="middle" fontSize="26" fill="#f79a9a">X</text>
  </svg>
);

const PlayIcon = ({ d, className }: { d: string; className: string }) => (
  <svg width="26" height="30" viewBox="0 0 26 30" className={`shrink-0 ${className}`}>
    <path d={d} fill="#4d4d4d" />
  </svg>
);

const SketchStep = () => (
  <svg width="32" height="32" viewBox="0 0 32 32" className="shrink-0 overflow-visible">
    <path d="M3 3H27M3 3V27M3 29H14M29 3V16" stroke="#666" strokeWidth="1.8" fill="none" />
    <rect x="0" y="0" width="5" height="5" fill="#1e88e5" />
    <rect x="26" y="0" width="5" height="5" fill="#1e88e5" />
    <rect x="0" y="26" width="5" height="5" fill="#1e88e5" />
    <path d="M18 32L16 27L27 17L31 22L21 32Z" fill="#f3c64b" />
    <path d="M27 17L31 22L33 19L30 14Z" fill="#ee3b3b" />
    <path d="M16 27L15 32L21 32Z" fill="#777" />
  </svg>
);

const FormStep = () => (
  <svg width="32" height="40" viewBox="0 0 32 40" className="-mt-[1px] mb-[-7px] shrink-0 overflow-visible">
    <path d="M0 20V38H14" fill="#dcdcdc" stroke="#666" strokeWidth="2" />
    <path d="M14 0L32 20L14 38L3 18Z" fill="#d69561" />
    <path d="M16 12L20 18M18 22L14 30" stroke="#30b060" strokeWidth="2" />
    <rect x="12" y="34" width="3" height="5" fill="#30b060" />
  </svg>
);

const ExtrudeStep = ({ flip = false }: { flip?: boolean }) => (
  <svg width="34" height="32" viewBox="0 0 34 32" className="shrink-0">
    <path d="M0 26H20L26 20V24L20 32H0Z" fill="#bbb" />
    <rect x="0" y="6" width="20" height="20" fill={BLUE} />
    <path d="M0 6L6 0H26L20 6Z" fill={BLUE_TOP} />
    <path d="M20 6L26 0V20L20 26Z" fill={BLUE_SIDE} />
    <path d={flip ? "M29 28V4M29 3L26 8H32Z" : "M30 28V4M30 3L27 8H33Z"} stroke="#333" strokeWidth="1.5" fill="#333" />
  </svg>
);

const Timeline = () => (
  <div className="flex h-[100px] shrink-0 items-center border-t-2 border-[#cfcfcf] bg-[#f1f1f1] pl-[22px]">
    <PlayIcon d="M0 0H4V30H0ZM26 0V30L6 15Z" className="" />
    <PlayIcon d="M0 15L17 0V30ZM20 9H26V22H20Z" className="ml-[22px]" />
    <PlayIcon d="M0 0L24 15L0 30Z" className="ml-[26px]" />
    <PlayIcon d="M0 9H6V22H0ZM9 0L26 15L9 30Z" className="ml-[22px]" />
    <PlayIcon d="M0 0L20 15L0 30ZM22 0H26V30H22Z" className="ml-[26px]" />
    <div className="relative ml-[44px] flex flex-col">
      <div className="flex gap-[16px]">
        <SketchStep />
        <SketchStep />
        <FormStep />
        <SketchStep />
        <ExtrudeStep />
        <ExtrudeStep flip />
      </div>
      <svg width="244" height="16" viewBox="0 0 244 16" className="ml-[16px] mt-[6px]">
        <path d="M2 0V13H242V0M50 0V13M98 0V13M146 0V13M194 0V13" fill="none" stroke="#cccccc" strokeWidth="3.5" />
      </svg>
      <svg width="26" height="66" viewBox="0 0 26 66" className="absolute left-[267px] top-[-12px]">
        <path d="M1 0H25V8L15 22H11L1 8Z" fill="#666" />
        <rect x="11" y="10" width="4" height="56" fill="#666" />
      </svg>
    </div>
  </div>
);

const thumbIcons = [262, 348, 434, 520, 606, 692, 800, 886, 972, 1058, 1144, 1230, 1338, 1424, 1584, 1764, 1917];
const thumbRows = [
  [190, 400],
  [190, 344],
  [230, 314],
  [230, 322],
  [230, 346],
  [230, 386],
];

const Thumbnail = () => (
  <div className="absolute left-[2552px] top-[1580px] h-[196px] w-[304px] rounded-[14px] bg-black p-[8px]">
    <svg width="288" height="180" viewBox="0 0 2880 1800" className="block blur-[0.6px]">
      <rect width="2880" height="1800" fill="#fff" />
      <GridLines major={false} minorColor="#f2f2f2" majorColor="#dddddd" />
      <GridLines major minorColor="#f2f2f2" majorColor="#dddddd" />
      <line x1="0" y1={2014} x2="2878" y2={2014 - SLOPE * 2878} stroke="#b4b4ff" strokeWidth="6" />
      <line x1="0" y1={178} x2="2878" y2={178 + SLOPE * 2878} stroke="#ffb4b4" strokeWidth="6" />
      <rect width="2880" height="44" fill="#4a2a1a" />
      <rect y="44" width="2880" height="44" fill="#dadada" />
      <rect y="88" width="2880" height="66" fill="#c9c9c9" />
      <rect x="395" y="98" width="1986" height="56" fill="#f1f1f1" />
      <rect y="154" width="2880" height="163" fill="#f1f1f1" />
      <rect y="1698" width="2880" height="102" fill="#f1f1f1" />
      <rect x="22" y="176" width="210" height="120" fill="#e4e4e4" />
      <rect x="226" y="164" width="238" height="48" rx="24" fill="#555" />
      {thumbIcons.map((x) => (
        <rect key={x} x={x} y="212" width="56" height="58" fill={x === 692 ? "#a67ee0" : x === 1764 ? "#f5a81c" : "#7fb4e0"} />
      ))}
      <rect x="2060" y="202" width="76" height="76" fill="#0696d7" />
      <rect x="8" y="326" width="598" height="48" fill="#ececec" />
      <rect x="130" y="390" width="188" height="32" fill="#999" />
      {thumbRows.map(([x, r], i) => (
        <rect key={i} x={x} y={442 + i * 48} width={r - x} height="22" fill="#999" />
      ))}
      <rect x="8" y="1640" width="598" height="48" fill="#ececec" />
      <rect x="1186" y="1642" width="506" height="48" fill="#d8d8d8" />
      <rect x="2752" y="390" width="70" height="80" fill="#e4e4e4" />
      <polygon points="680,918 1897,1622 2200,1447 983,744" fill="#d0c8be" />
      <path d="M680 918L1897 1622L2200 1447V1095" fill="none" stroke="#8ab0ea" strokeWidth="6" />
      <polygon points="1922,1285 2200,1127 2200,1447" fill="#fdf4e6" />
      <polygon points="678,568 1896,1271 1896,1320 678,617" fill="#57534b" />
      <polygon points="1896,1271 2225,1082 2225,1132 1896,1320" fill="#45433d" />
      <polygon points="1006,378 678,568 1896,1271 2225,1082" fill="#6f6b60" />
    </svg>
  </div>
);

export default function App() {
  return (
    <div className="relative h-[1800px] w-[2880px] overflow-hidden bg-[linear-gradient(90deg,#6b1a1a_0%,#2a1a1a_15%,#144060_25%,#10304c_50%,#7a6818_72%,#3a2a80_85%,#8a2a60_100%)] font-['Open_Sans',sans-serif]">
      <MenuBar />
      <div className="mt-[2px] flex h-[1752px] w-[2878px] flex-col overflow-hidden rounded-[10px]">
        <TitleBar />
        <Toolbar />
        <Ribbon />
        <div className="relative flex-1 bg-white">
          <Scene />
          <Browser />
          <Comments />
          <NavBar />
        </div>
        <Timeline />
      </div>
      <Thumbnail />
    </div>
  );
}
